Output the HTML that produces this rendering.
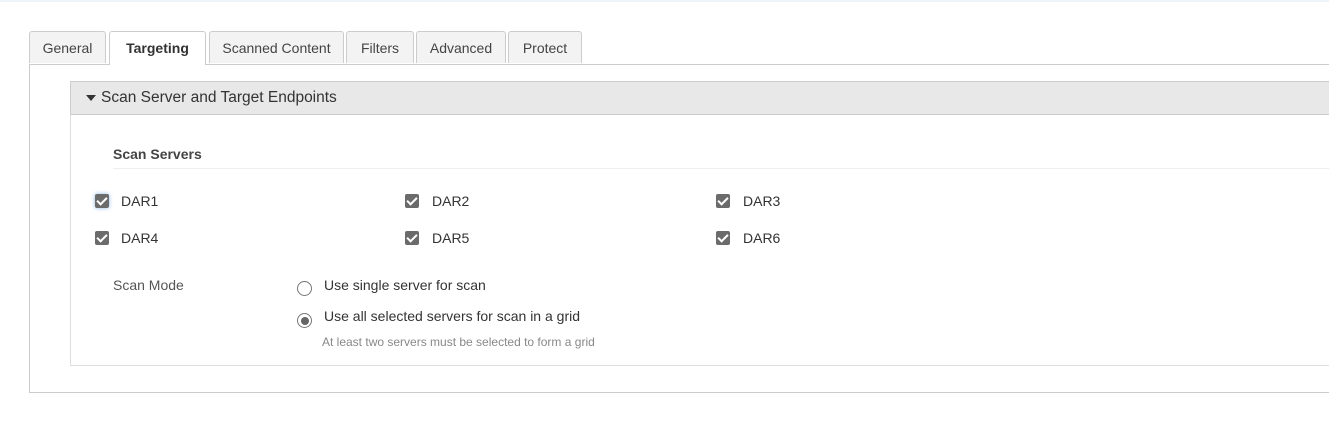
<!DOCTYPE html>
<html><head><style>
body{margin:0;width:1329px;height:444px;background:#fff;font-family:"Liberation Sans",sans-serif;color:#333;position:relative;overflow:hidden}
.topline{position:absolute;left:0;top:0;width:1329px;height:2px;background:#eef5fa}
.tab{position:absolute;top:31px;height:32px;border:1px solid #ccc;border-bottom:none;background:#f3f3f3;border-radius:3px 3px 0 0;font-size:14px;line-height:32px;text-align:center;color:#444;box-sizing:border-box}
.tab.act{background:#fff;font-weight:bold;color:#333;height:34px}
.panel{position:absolute;left:29px;top:64px;width:1310px;height:329px;border:1px solid #ccc;box-sizing:border-box}
.hdr{position:absolute;left:70px;top:81px;width:1270px;height:34px;background:#e8e8e8;border:1px solid #ccc;box-sizing:border-box;font-size:15.5px;line-height:32px;padding-left:30px;color:#333}
.hdr:before{content:"";position:absolute;left:15px;top:13px;border-left:5px solid transparent;border-right:5px solid transparent;border-top:6px solid #333}
.body{position:absolute;left:70px;top:115px;width:1270px;height:251px;border-left:1px solid #ddd;border-bottom:1px solid #ddd;box-sizing:border-box}
.t{position:absolute;font-size:14px;white-space:nowrap}
.cb{position:absolute;width:14px;height:14px;background:#6b6b6b;border-radius:2px}
.cb:after{content:"";position:absolute;left:4px;top:1px;width:4px;height:8px;border:solid #fff;border-width:0 2px 2px 0;transform:rotate(45deg)}
.rad{position:absolute;width:13px;height:13px;border:1px solid #777;border-radius:50%;background:#fff}
</style></head><body>
<div class="topline"></div>
<div class="panel"></div>
<div class="tab" style="left:29px;width:77px">General</div>
<div class="tab act" style="left:109px;width:97px">Targeting</div>
<div class="tab" style="left:209px;width:135px">Scanned Content</div>
<div class="tab" style="left:346px;width:68px">Filters</div>
<div class="tab" style="left:416px;width:90px">Advanced</div>
<div class="tab" style="left:508px;width:74px">Protect</div>
<div class="hdr">Scan Server and Target Endpoints</div>
<div class="body"></div>
<div class="t" style="left:113px;top:146px;font-weight:bold;color:#444">Scan Servers</div>
<div style="position:absolute;left:113px;top:168px;width:1220px;height:1px;background:#eee"></div>
<div class="cb" style="left:95px;top:194px;box-shadow:0 0 4px #8bb8e8"></div><div class="t" style="left:121px;top:193px">DAR1</div>
<div class="cb" style="left:405px;top:194px"></div><div class="t" style="left:432px;top:193px">DAR2</div>
<div class="cb" style="left:716px;top:194px"></div><div class="t" style="left:743px;top:193px">DAR3</div>
<div class="cb" style="left:95px;top:231px"></div><div class="t" style="left:121px;top:230px">DAR4</div>
<div class="cb" style="left:405px;top:231px"></div><div class="t" style="left:432px;top:230px">DAR5</div>
<div class="cb" style="left:716px;top:231px"></div><div class="t" style="left:743px;top:230px">DAR6</div>
<div class="t" style="left:113px;top:277px;color:#555">Scan Mode</div>
<div class="rad" style="left:297px;top:281px"></div><div class="t" style="left:324px;top:277px">Use single server for scan</div>
<div class="rad" style="left:297px;top:313px"><div style="position:absolute;left:2.5px;top:2.5px;width:8px;height:8px;border-radius:50%;background:#666"></div></div><div class="t" style="left:324px;top:308px">Use all selected servers for scan in a grid</div>
<div class="t" style="left:322px;top:335px;font-size:12px;color:#888">At least two servers must be selected to form a grid</div>
</body></html>
